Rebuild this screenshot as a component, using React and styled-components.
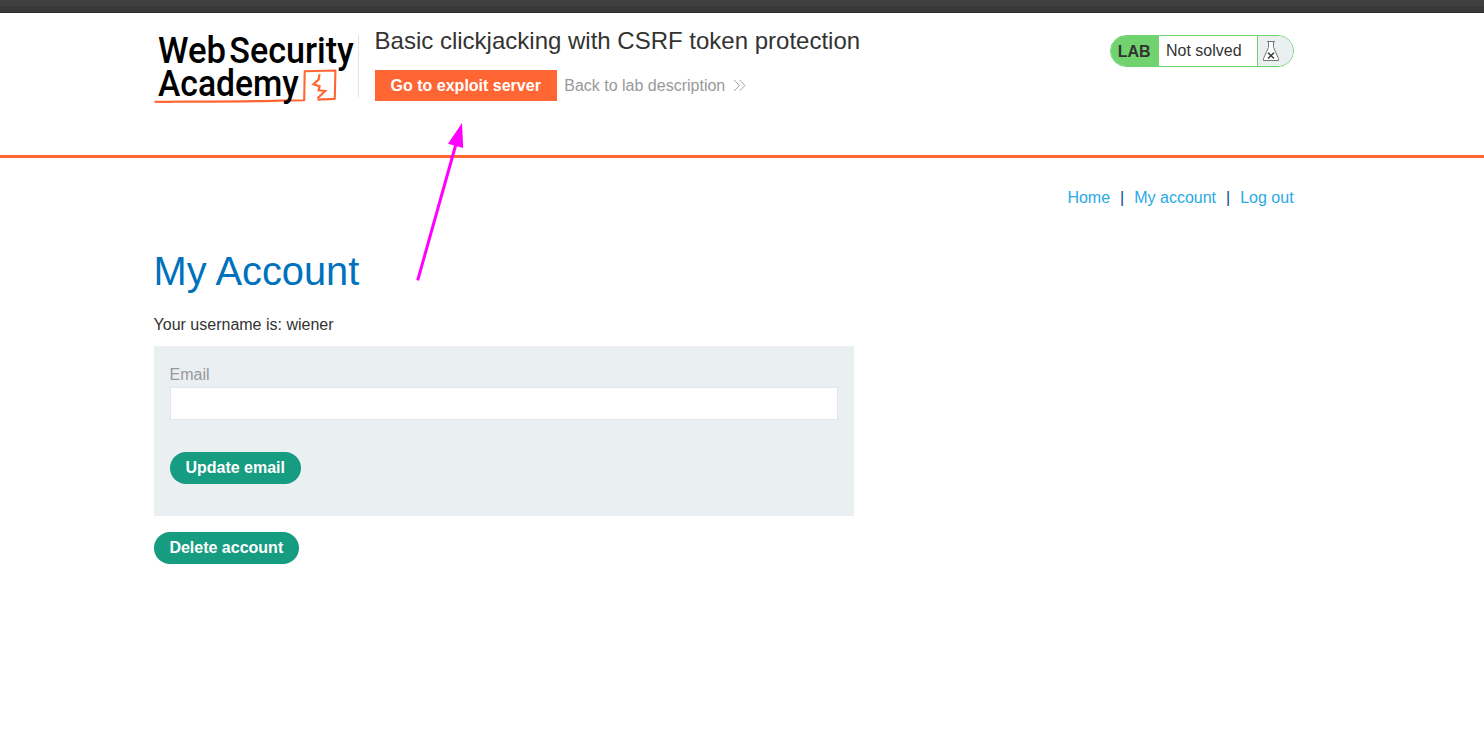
import React from 'react';
import styled, { createGlobalStyle } from 'styled-components';

const GlobalStyle = createGlobalStyle`
  *, *::before, *::after { box-sizing: border-box; }
  html, body { margin: 0; padding: 0; background: #fff; }
  body {
    font-family: "Liberation Sans", Arial, sans-serif;
    font-size: 16px;
    line-height: 18px;
    color: #333332;
    overflow: hidden;
  }
`;

const Page = styled.div`
  position: relative;
  height: 746px;
`;

const BrowserEdge = styled.div`
  height: 13px;
  background: linear-gradient(#404040 0 6px, #393939 6px 12px, #292929 12px);
`;

const Header = styled.header`
  height: 145px;
  padding-left: 153.6px;
  border-bottom: 3px solid #ff6633;
`;

const HeaderInner = styled.div`
  display: flex;
  align-items: flex-start;
  width: 1140px;
`;

const Logo = styled.svg`
  flex: none;
  width: 204px;
  height: 80px;
  margin-top: 17px;
  overflow: visible;
`;

const LogoWord = styled.text`
  font-family: Roboto, "Liberation Sans", sans-serif;
  font-size: 37px;
  font-weight: 500;
  fill: #000;
`;

const TitleBlock = styled.div`
  flex: 1;
  margin-top: 22px;
  height: 62px;
  padding-left: 16px;
  border-left: 1px solid #e3e3e3;
`;

const Title = styled.h2`
  margin: -9px 0 15px;
  font-size: 24px;
  line-height: 29px;
  font-weight: 400;
`;

const Actions = styled.div`
  display: flex;
  align-items: center;
  gap: 7.4px;
`;

const ExploitButton = styled.a`
  height: 31px;
  padding: 0 16px;
  line-height: 31px;
  background: #ff6633;
  color: #fff;
  font-weight: 700;
`;

const BackLink = styled.a`
  display: flex;
  align-items: center;
  gap: 8px;
  color: #999;
`;

const Status = styled.div`
  display: flex;
  flex: none;
  width: 184px;
  height: 32px;
  margin-top: 22px;
  line-height: 30px;
  border: 1px solid #70d36f;
  border-radius: 16px;
  overflow: hidden;
`;

const StatusTag = styled.span`
  width: 48px;
  padding-left: 7.2px;
  background: #70d36f;
  line-height: 32px;
  font-weight: 700;
`;

const StatusText = styled.span`
  flex: 1;
  padding-left: 7.4px;
`;

const StatusIcon = styled.span`
  width: 36px;
  padding: 4px 0 0 4.4px;
  background: #eaeff2;
  border-left: 1px solid #70d36f;
  line-height: 0;
`;

const Main = styled.main`
  width: 1140px;
  margin-left: 153.6px;
  padding-top: 31px;
`;

const Nav = styled.nav`
  display: flex;
  justify-content: flex-end;
  gap: 10px;
  color: #094b8f;
`;

const NavLink = styled.a`
  color: #29a9e6;
`;

const Heading = styled.h1`
  margin: 41px 0 0;
  font-size: 39.8px;
  line-height: 46px;
  font-weight: 400;
  color: #0071bb;
`;

const Username = styled.p`
  margin: 22px 0 12px;
`;

const Form = styled.form`
  width: 700px;
  height: 170px;
  padding: 20px 16px 0;
  background: #eaeff2;
`;

const Label = styled.label`
  display: block;
  color: #999;
`;

const Input = styled.input`
  display: block;
  width: 668px;
  height: 33px;
  margin: 3px 0 32px;
  padding: 0 8px;
  border: 1px solid #e2e6e6;
  background: #fff;
  outline: none;
`;

const PillButton = styled.button`
  display: block;
  height: 32px;
  margin-top: ${(p) => p.$gap || 0}px;
  padding: 0 15.8px 1px;
  border: 0;
  border-radius: 16px;
  background: #169c80;
  color: #fff;
  font: 700 16px/30px "Liberation Sans", Arial, sans-serif;
`;

const Arrow = styled.svg`
  position: absolute;
  left: 410px;
  top: 118px;
  pointer-events: none;
`;

function AcademyLogo() {
  return (
    <Logo viewBox="0 0 204 80" role="img" aria-label="Web Security Academy">
      <path d="M0.5 71.8C40 71.5 96 71.6 125 70.6L150.2 70.2L150.7 41.2L181.4 40.5L180.8 68.9L163.5 69.6" fill="none" stroke="#ff6633" strokeWidth="2.1" strokeLinejoin="round" />
      <path d="M0 71.3L18 71.4L18 73L3 72.8Z" fill="#ff6633" />
      <path d="M165.5 44.2L164.6 49.6L159.4 54.3L165.6 56.3L164.6 60.3L171.2 61L163.5 68.2" fill="none" stroke="#ff6633" strokeWidth="2.2" />
      <LogoWord x="4" y="33.4" textLength="68" lengthAdjust="spacingAndGlyphs">Web</LogoWord>
      <LogoWord x="75.3" y="33.4" textLength="124.5" lengthAdjust="spacingAndGlyphs">Security</LogoWord>
      <LogoWord x="4" y="65.8" textLength="140.8" lengthAdjust="spacingAndGlyphs">Academy</LogoWord>
    </Logo>
  );
}

function DoubleChevron() {
  return (
    <svg width="13" height="12" viewBox="0 0 13 12" fill="none" stroke="#999" strokeWidth="0.9">
      <path d="M1 0L6.5 5.5L1 11M6.5 0L12 5.5L6.5 11" />
    </svg>
  );
}

function Flask() {
  return (
    <svg width="18" height="22" viewBox="0 0 18 22">
      <path d="M6.5 1.5V7.5L1.5 18.5V20.5H16.5V18.5L11.5 7.5V1.5Z" fill="#fff" stroke="#777" strokeWidth="1" />
      <path d="M5 1.5H13" stroke="#777" />
      <path d="M6 12.7L12 18.5M12 12.7L6 18.5" stroke="#333332" strokeWidth="1.4" />
    </svg>
  );
}

export default function App() {
  return (
    <Page>
      <GlobalStyle />
      <BrowserEdge />
      <Header>
        <HeaderInner>
          <AcademyLogo />
          <TitleBlock>
            <Title>Basic clickjacking with CSRF token protection</Title>
            <Actions>
              <ExploitButton>Go to exploit server</ExploitButton>
              <BackLink>Back to lab description <DoubleChevron /></BackLink>
            </Actions>
          </TitleBlock>
          <Status>
            <StatusTag>LAB</StatusTag>
            <StatusText>Not solved</StatusText>
            <StatusIcon><Flask /></StatusIcon>
          </Status>
        </HeaderInner>
      </Header>
      <Main>
        <Nav>
          <NavLink>Home</NavLink>
          <span>|</span>
          <NavLink>My account</NavLink>
          <span>|</span>
          <NavLink>Log out</NavLink>
        </Nav>
        <Heading>My Account</Heading>
        <Username>Your username is: wiener</Username>
        <Form>
          <Label htmlFor="email">Email</Label>
          <Input id="email" type="email" />
          <PillButton type="button">Update email</PillButton>
        </Form>
        <PillButton type="button" $gap={16}>Delete account</PillButton>
      </Main>
      <Arrow width="64" height="170" viewBox="0 0 64 170">
        <path d="M7.7 162.3L46 26" stroke="#ff00ff" strokeWidth="3" />
        <path d="M52 5L53.2 30L38 25.7Z" fill="#ff00ff" />
      </Arrow>
    </Page>
  );
}
